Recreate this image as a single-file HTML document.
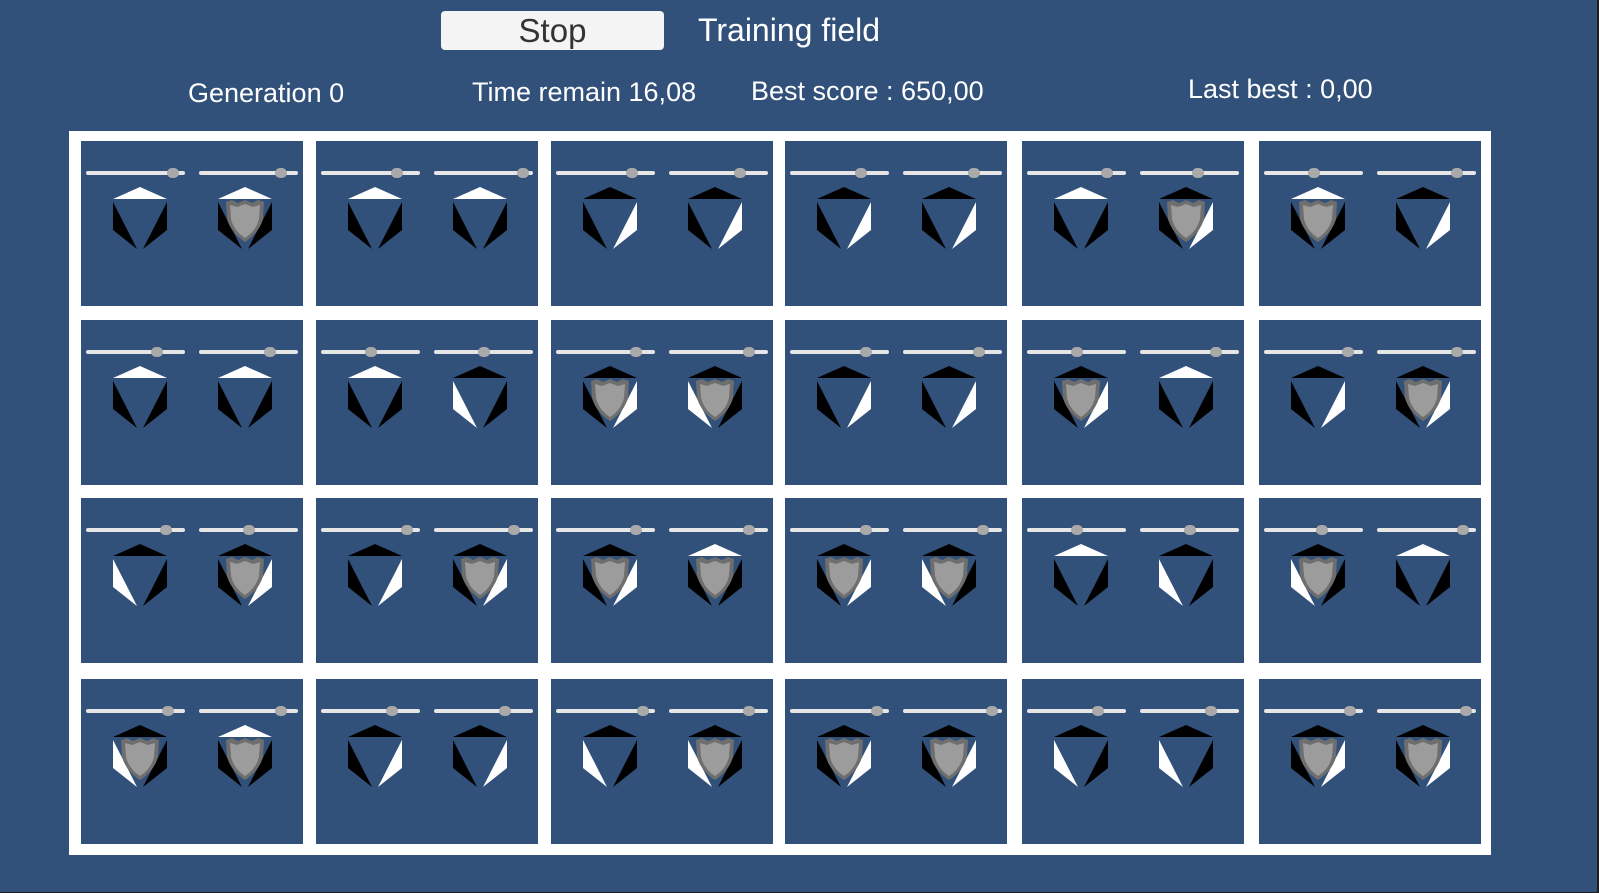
<!DOCTYPE html>
<html><head><meta charset="utf-8"><style>
html,body{margin:0;padding:0}
body{width:1599px;height:893px;background:#31507a;position:relative;overflow:hidden;font-family:"Liberation Sans",sans-serif;color:#fff}
.edge{position:absolute;background:#1e1e1e}
.btn{position:absolute;left:441px;top:11px;width:223px;height:39px;background:#f4f4f4;border-radius:4px;color:#333;font-size:33px;text-align:center;line-height:39px}
.t{position:absolute;white-space:nowrap}
#frame{position:absolute;left:69px;top:131px;width:1422px;height:724px;background:#fff}
.cell{position:absolute;width:222px;height:165px;background:#31507a}
.tr{position:absolute;height:4px;width:99px;background:#e6e6e6;border-radius:2px;top:30px}
.kn{position:absolute;width:12px;height:10px;border-radius:6px;background:#a9a9a9;top:-3px}
svg{position:absolute}
</style></head><body>
<div class="btn">Stop</div>
<div class="t" style="left:698px;top:12px;font-size:32px">Training field</div>
<div class="t" style="left:188px;top:78px;font-size:27px">Generation 0</div>
<div class="t" style="left:472px;top:77px;font-size:27px">Time remain 16,08</div>
<div class="t" style="left:751px;top:76px;font-size:27px">Best score : 650,00</div>
<div class="t" style="left:1188px;top:74px;font-size:27px">Last best : 0,00</div>
<div id="frame"></div>
<div class="edge" style="right:0;top:0;width:2px;height:893px"></div>
<div class="edge" style="left:0;bottom:0;width:1599px;height:1px"></div>
<script>
var S=[
["WBB0","WBB1","WBB0","WBB0","BBW0","BBW0","BBW0","BBW0","WBB0","BBW1","WBB1","BBW0"],
["WBB0","WBB0","WBB0","BWB0","BBW1","BWB1","BBW0","BBW0","BBW1","WBB0","BBW0","BBW1"],
["BWB0","BBW1","BBW0","BBW1","BBW1","WBB1","BBW1","BWB1","WBB0","BWB0","BWB1","WBB0"],
["BWB1","WBB1","BBW0","BBW0","BWB0","BWB1","BBW1","BBW1","BWB0","BWB0","BBW1","BBW1"]];
var K=[[.93,.87,.8,.95,.8,.75,.75,.75,.85,.6,.5,.85],
[.75,.75,.5,.5,.85,.85,.8,.8,.5,.8,.9,.85],
[.85,.5,.92,.85,.85,.85,.8,.85,.5,.5,.6,.92],
[.87,.87,.75,.75,.93,.85,.93,.95,.75,.75,.92,.95]];
var f=document.getElementById('frame'),h='';
var cx=[12,247,482,716,953,1190],ry=[10,189,367,548];
function col(c){return c=='W'?'#fff':'#000'}
for(var r=0;r<4;r++)for(var c=0;c<6;c++){
 h+='<div class="cell" style="left:'+cx[c]+'px;top:'+ry[r]+'px">';
 for(var i=0;i<2;i++){
  var s=S[r][c*2+i],k=K[r][c*2+i];
  h+='<div class="tr" style="left:'+(5+i*113)+'px"><div class="kn" style="left:'+(k*87)+'px"></div></div>';
  h+='<svg width="54" height="62" style="left:'+(32+i*105)+'px;top:46px" viewBox="0 0 54 62">'+
  '<polygon points="0,12 54,12 27,0" fill="'+col(s[0])+'"/>'+
  '<polygon points="0,15 0,43 24,62" fill="'+col(s[1])+'"/>'+
  '<polygon points="54,15 54,43 30,62" fill="'+col(s[2])+'"/>';
  if(s[3]=='1')h+='<path d="M8,15 L14,13 L20,16 L27,13 L34,16 L40,13 L46,15 L45,32 Q41,46 27,55 Q13,46 9,32 Z" fill="#6e6e6e"/><path d="M12,18 L19,20 L27,17 L35,20 L42,18 L41,32 Q38,44 27,51 Q16,44 13,32 Z" fill="#9c9c9c"/>';
  h+='</svg>';
 }
 h+='</div>';
}
f.innerHTML=h;
</script>
</body></html>
